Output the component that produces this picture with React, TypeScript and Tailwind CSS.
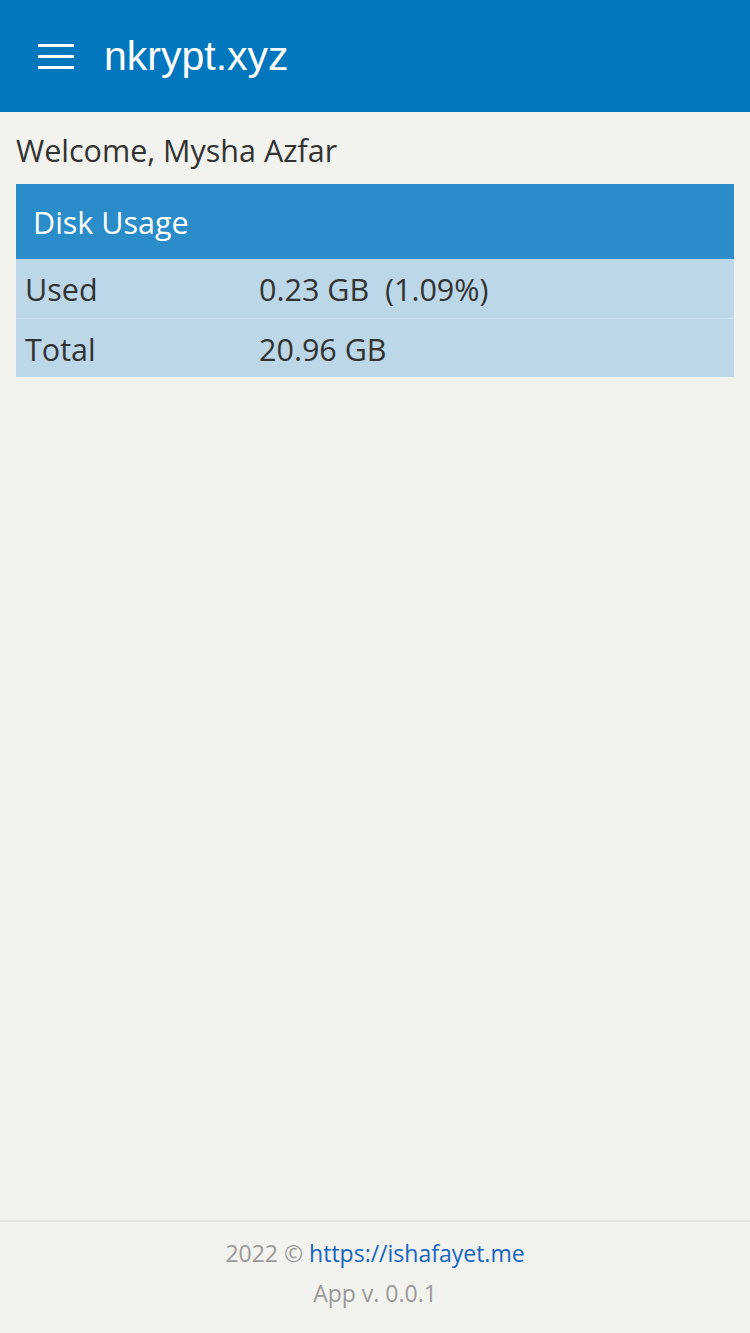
const ROWS = [
  { label: "Used", value: "0.23 GB\u00a0\u00a0(1.09%)" },
  { label: "Total", value: "20.96 GB" },
];

export default function App() {
  return (
    <div
      className="min-h-[1333px] flex flex-col bg-[#f2f2ee] text-[#333333]"
      style={{ fontFamily: '"Open Sans", "Noto Sans", sans-serif' }}
    >
      {/* Header */}
      <header className="h-[112px] bg-[#0277bd] flex items-center px-[38px] gap-[30px]">
        <div className="flex flex-col gap-[8px] w-[36px]">
          <span className="block h-[3px] bg-white" />
          <span className="block h-[3px] bg-white" />
          <span className="block h-[3px] bg-white" />
        </div>
        <h1
          className="text-white text-[41px] leading-none"
          style={{ fontFamily: '"Liberation Sans", Arial, sans-serif' }}
        >
          nkrypt.xyz
        </h1>
      </header>

      {/* Content */}
      <main className="flex-1 px-4 pt-[18px]">
        <p className="text-[30.5px] leading-[40px] mb-[14px]">Welcome, Mysha Azfar</p>
        <div className="bg-[#bbd7e8]">
          <div className="h-[75px] bg-[#2a8cc8] flex items-center px-[17px] pt-[3px] text-white text-[30.5px]">
            Disk Usage
          </div>
          {ROWS.map((row, i) => (
            <div
              key={row.label}
              className={
                "flex items-center h-[59px] pt-[3px] text-[30.5px] " +
                (i > 0 ? "border-t border-[#cfe2ee]" : "")
              }
            >
              <div className="w-[243px] pl-[9px]">{row.label}</div>
              <div>{row.value}</div>
            </div>
          ))}
        </div>
      </main>

      {/* Footer */}
      <footer className="border-t-2 border-[#e4e4e2] h-[113px] flex flex-col items-center pt-[16px] text-[23px] text-[#9a9a9a]">
        <div className="leading-[30px]">
          2022 © <a className="text-[#1565c0]" href="#">https://ishafayet.me</a>
        </div>
        <div className="leading-[30px] mt-[10px]">App v. 0.0.1</div>
      </footer>
    </div>
  );
}
